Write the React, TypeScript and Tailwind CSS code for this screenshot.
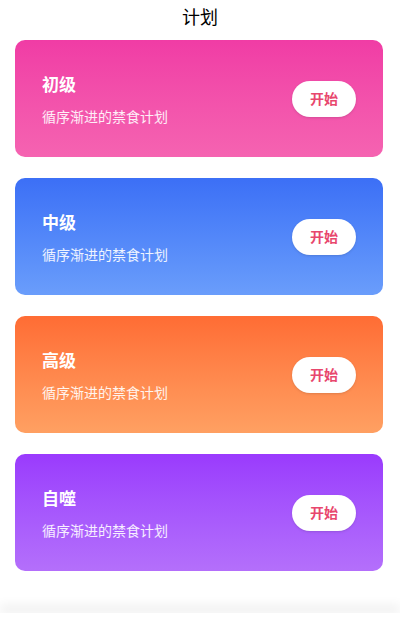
import React from "react";

// 计划列表：四档禁食计划卡片
type Plan = { name: string; bg: string };

const PLANS: Plan[] = [
  { name: "初级", bg: "bg-gradient-to-b from-[#f03ca5] to-[#f563b1]" },
  { name: "中级", bg: "bg-gradient-to-b from-[#3c6ff6] to-[#6a9dfb]" },
  { name: "高级", bg: "bg-gradient-to-b from-[#ff6c34] to-[#ffa062]" },
  { name: "自噬", bg: "bg-gradient-to-b from-[#9a3afd] to-[#b46ffb]" },
];

export default function App() {
  return (
    <div
      className="relative flex h-[618px] w-[400px] flex-col overflow-hidden bg-white"
      style={{ fontFamily: '"Noto Sans CJK SC", "Noto Sans", sans-serif' }}
    >
      <h1 className="mt-[2px] text-center text-[18px] leading-[28px] text-black">计划</h1>
      <div className="ml-[15px] mt-[10px] flex w-[368px] flex-col gap-[21px]">
        {PLANS.map((p) => (
          <div
            key={p.name}
            className={"flex h-[117px] items-center justify-between rounded-[10px] pl-[27px] pr-[27px] " + p.bg}
          >
            <div className="flex flex-col">
              <span className="text-[17px] font-bold leading-[24px] text-white">{p.name}</span>
              <span className="mt-[10px] text-[14px] leading-[20px] text-white/90">循序渐进的禁食计划</span>
            </div>
            <button className="h-[36px] w-[64px] rounded-full bg-white text-[14px] font-bold text-[#e8476d] shadow-sm">
              开始
            </button>
          </div>
        ))}
      </div>
      <div className="absolute bottom-0 left-0 h-[5px] w-full bg-white shadow-[0_-6px_12px_rgba(0,0,0,0.12)]" />
    </div>
  );
}
